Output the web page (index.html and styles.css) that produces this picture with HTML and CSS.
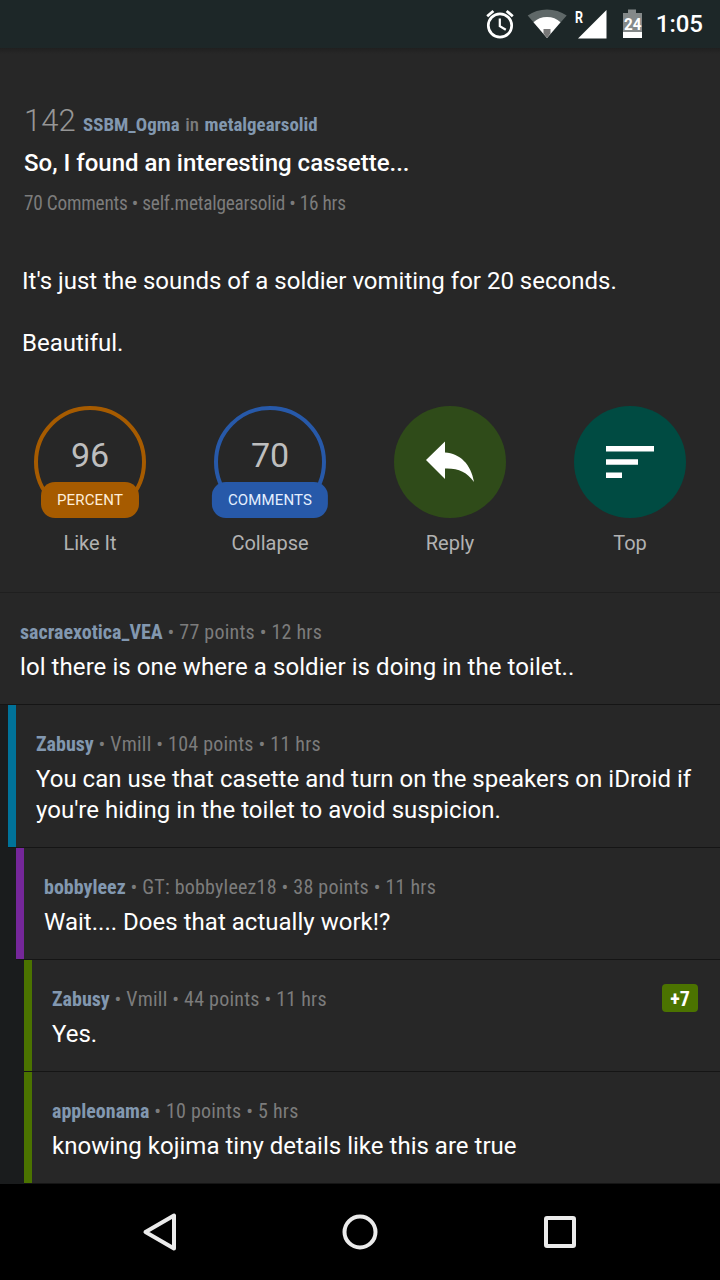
FILE: index.html
```html
<!DOCTYPE html>
<html lang="en">
<head>
<meta charset="utf-8">
<title>So, I found an interesting cassette...</title>
<link rel="stylesheet" href="styles.css">
</head>
<body>
<div class="screen">
  <header class="status">
    <svg class="status-icons" width="174" height="48" viewBox="0 0 174 48">
      <g fill="none" stroke="#fff">
        <circle cx="30" cy="25.500" r="11.700" stroke-width="2.700"/>
        <path d="M29.800 18.500v7.700l6 3.600" stroke-width="2.200"/>
        <path d="M17.200 16.200l6.200-5.200M36.600 11l6.200 5.200" stroke-width="2.800"/>
      </g>
      <path d="M77 38L57.700 15.500Q66 9.500 77 9.500T96.700 15.500Z" fill="#5f6868"/>
      <path d="M77 38L63.500 22.200Q69 17 77 17T90.500 22.200Z" fill="#fff"/>
      <path d="M77 38L73.500 33.500V29h7v4.500Z" fill="#777"/>
      <path d="M136.500 10v28.500H108Z" fill="#fff"/>
      <path d="M158 9.500h8V13h6v19h-19V13h5Z" fill="#848989"/>
      <path d="M153 32h19v6h-19Z" fill="#fff"/>
      <text class="roaming" x="105" y="22.500" textLength="8" lengthAdjust="spacingAndGlyphs">R</text>
      <text class="battery" x="154" y="30" textLength="17.500" lengthAdjust="spacingAndGlyphs">24</text>
    </svg>
    <span class="clock">1:05</span>
  </header>
  <main class="content">
    <section class="post">
      <div class="byline"><span class="score">142</span><span class="cond"><b>SSBM_Ogma</b> <span class="in">in</span> <b>metalgearsolid</b></span></div>
      <h1 class="title">So, I found an interesting cassette...</h1>
      <div class="info cond">70 Comments • self.metalgearsolid • 16 hrs</div>
      <p class="text">It's just the sounds of a soldier vomiting for 20 seconds.</p>
      <p class="text">Beautiful.</p>
    </section>
    <nav class="actions">
      <div class="action"><div class="ring orange"><span class="num">96</span><span class="pill">PERCENT</span></div><span class="label">Like It</span></div>
      <div class="action"><div class="ring blue"><span class="num">70</span><span class="pill">COMMENTS</span></div><span class="label">Collapse</span></div>
      <div class="action"><div class="disc green"><svg width="112" height="112" viewBox="0 0 112 112"><path d="M32 54L51 35.500V46.500C66 47.500 77 58 80 76C73 66 64 62 51 62.500V73Z" fill="#fff"/></svg></div><span class="label">Reply</span></div>
      <div class="action"><div class="disc teal"><svg width="112" height="112" viewBox="0 0 112 112"><path d="M32 40h48v5.500H32zM32 53.300h32v5.500H32zM32 66.500h16v5.500H32z" fill="#fff"/></svg></div><span class="label">Top</span></div>
    </nav>
    <section class="thread">
      <article class="comment d0"><div class="meta cond"><b>sacraexotica_VEA</b> • 77 points • 12 hrs</div><p class="reply">lol there is one where a soldier is doing in the toilet..</p></article>
      <article class="comment d1"><div class="meta cond"><b>Zabusy</b> • Vmill • 104 points • 11 hrs</div><p class="reply">You can use that casette and turn on the speakers on iDroid if you're hiding in the toilet to avoid suspicion.</p></article>
      <article class="comment d2"><div class="meta cond"><b>bobbyleez</b> • GT: bobbyleez18 • 38 points • 11 hrs</div><p class="reply">Wait.... Does that actually work!?</p></article>
      <article class="comment d3"><div class="meta cond"><b>Zabusy</b> • Vmill • 44 points • 11 hrs</div><p class="reply">Yes.</p><span class="badge cond">+7</span></article>
      <article class="comment d3"><div class="meta cond"><b>appleonama</b> • 10 points • 5 hrs</div><p class="reply">knowing kojima tiny details like this are true</p></article>
    </section>
  </main>
  <footer class="navbar">
    <svg width="200" height="96" viewBox="0 0 200 96"><path d="M85.500 48L114 31.500V64.500Z"/></svg>
    <svg width="200" height="96" viewBox="0 0 200 96"><circle cx="100" cy="48" r="15.500"/></svg>
    <svg width="200" height="96" viewBox="0 0 200 96"><rect x="86" y="34" width="28" height="28" rx="1"/></svg>
  </footer>
</div>
</body>
</html>
```
FILE: styles.css
```css
* { box-sizing: border-box; }
body { margin: 0; background: #272727; color: #fff; font-family: Roboto, sans-serif; }
p, h1 { margin: 0; }
.screen { width: 720px; height: 1280px; display: flex; flex-direction: column; overflow: hidden; }
.status { height: 48px; flex: none; display: flex; justify-content: flex-end; align-items: center; padding-right: 17px; background: #1d2728; }
.status-icons { margin-right: 12px; }
.clock { font-size: 24px; font-weight: 500; line-height: 50px; }
.roaming, .battery { fill: #fff; font-family: Roboto, sans-serif; font-weight: 700; }
.roaming { font-size: 17px; }
.battery { font-size: 17px; }
.content { flex: 1; background: linear-gradient(#202020, #272727 6px); }
.cond { font-family: "Roboto Condensed", Roboto, sans-serif; font-stretch: 75%; color: #7c7c7c; white-space: nowrap; }
.cond b { color: #8298b0; font-weight: 700; letter-spacing: 0; }
.in { font-weight: 500; }
.post { height: 345px; padding: 55px 22px 0; }
.byline { display: flex; align-items: baseline; padding-left: 2px; line-height: 36px; font-size: 18.900px; word-spacing: 1.200px; }
.score { width: 59px; font-size: 31px; font-weight: 300; color: #969696; }
.title { padding-left: 2px; margin-top: 5px; font-size: 24px; font-weight: 500; line-height: 31px; }
.info { padding-left: 2px; margin: 13px 0 50px; font-size: 19.300px; letter-spacing: -0.220px; line-height: 24px; }
.text { margin-bottom: 31px; font-size: 24px; line-height: 31px; }
.actions { display: grid; grid-template-columns: repeat(4, 1fr); height: 200px; padding-top: 13px; border-bottom: 1px solid #1f1f1f; }
.action { display: flex; flex-direction: column; align-items: center; }
.ring, .disc { width: 112px; height: 112px; border-radius: 50%; }
.ring { position: relative; border: 4px solid; text-align: center; }
.disc svg { display: block; }
.orange { border-color: #a65b00; }
.blue { border-color: #2759a9; }
.green { background: #2f4b19; }
.teal { background: #004b42; }
.num { display: block; padding-top: 25px; font-size: 34px; line-height: 40px; color: #bebebe; }
.pill { position: absolute; left: 50%; bottom: -4px; transform: translateX(-50%); padding: 0 16px; border-radius: 14px; font-size: 15px; letter-spacing: 0.150px; line-height: 36px; }
.orange .pill { background: #a65b00; color: #ffeed8; }
.blue .pill { background: #2759a9; color: #e4efff; }
.label { margin-top: 13px; font-size: 20px; line-height: 24px; color: #b2b2b2; }
.thread { background: #1a1c1d; }
.comment { position: relative; padding: 28px 20px 21px; background: #272727; border-bottom: 1px solid #151515; }
.comment::before { content: ""; position: absolute; left: 0; top: 0; bottom: 0; width: 8px; }
.d1 { margin-left: 8px; padding-left: 28px; }
.d2 { margin-left: 16px; padding-left: 28px; }
.d3 { margin-left: 24px; padding-left: 28px; }
.d1::before { background: #007299; }
.d2::before { background: #75279a; }
.d3::before { background: #4b7300; }
.meta { font-size: 20px; letter-spacing: 0.220px; line-height: 23px; }
.reply { margin-top: 8px; font-size: 24px; letter-spacing: 0.020px; line-height: 31px; }
.d0 .reply { letter-spacing: 0.075px; }
.badge { position: absolute; right: 22px; top: 24px; width: 36px; height: 28px; border-radius: 4px; background: #4b7300; color: #fff; font-size: 20px; font-weight: 700; line-height: 30px; text-align: center; }
.navbar { height: 96px; flex: none; display: flex; justify-content: center; background: #000; }
.navbar svg { flex: none; fill: none; stroke: #ebebeb; stroke-width: 4; stroke-linejoin: round; }
```
